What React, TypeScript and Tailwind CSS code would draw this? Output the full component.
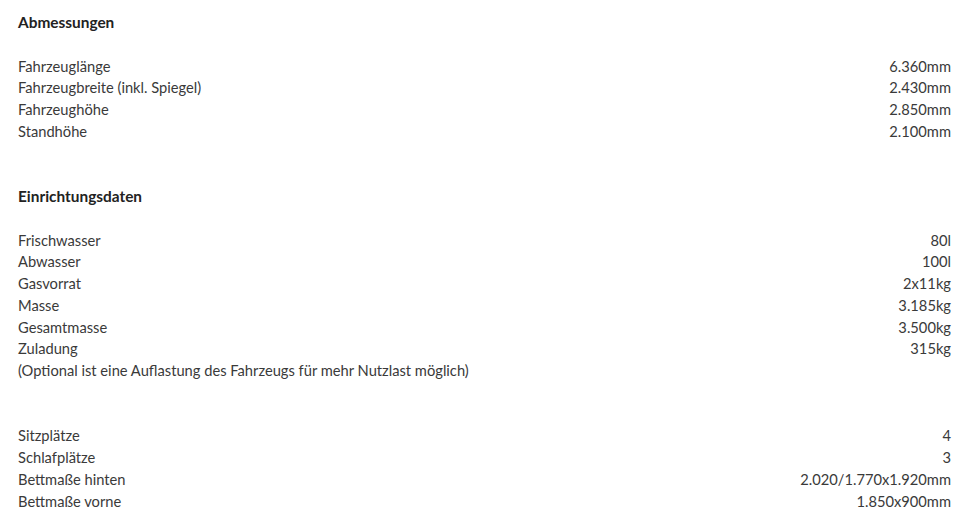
import React from 'react';

type Row = { label: string; value?: string };

const sections: { title?: string; rows: Row[]; gapBefore: string }[] = [
  {
    title: 'Abmessungen',
    gapBefore: '',
    rows: [
      { label: 'Fahrzeuglänge', value: '6.360mm' },
      { label: 'Fahrzeugbreite (inkl. Spiegel)', value: '2.430mm' },
      { label: 'Fahrzeughöhe', value: '2.850mm' },
      { label: 'Standhöhe', value: '2.100mm' },
    ],
  },
  {
    title: 'Einrichtungsdaten',
    gapBefore: 'mt-[43.5px]',
    rows: [
      { label: 'Frischwasser', value: '80l' },
      { label: 'Abwasser', value: '100l' },
      { label: 'Gasvorrat', value: '2x11kg' },
      { label: 'Masse', value: '3.185kg' },
      { label: 'Gesamtmasse', value: '3.500kg' },
      { label: 'Zuladung', value: '315kg' },
      { label: '(Optional ist eine Auflastung des Fahrzeugs für mehr Nutzlast möglich)' },
    ],
  },
  {
    gapBefore: 'mt-[43.5px]',
    rows: [
      { label: 'Sitzplätze', value: '4' },
      { label: 'Schlafplätze', value: '3' },
      { label: 'Bettmaße hinten', value: '2.020/1.770x1.920mm' },
      { label: 'Bettmaße vorne', value: '1.850x900mm' },
    ],
  },
];

export default function App() {
  return (
    <div
      className="min-h-screen bg-white pt-[12px] pl-[18px] pr-[15px] text-[14.7px] leading-[21.75px] text-[#3a3a3a]"
      style={{ fontFamily: 'Lato, "Open Sans", sans-serif' }}
    >
      {sections.map((section, i) => (
        <div key={i} className={section.gapBefore}>
          {section.title && (
            <h3 className="mb-[21.75px] text-[15.4px] font-bold text-[#222]">{section.title}</h3>
          )}
          {section.rows.map((row) => (
            <div key={row.label} className="flex justify-between">
              <span>{row.label}</span>
              {row.value && <span>{row.value}</span>}
            </div>
          ))}
        </div>
      ))}
    </div>
  );
}
